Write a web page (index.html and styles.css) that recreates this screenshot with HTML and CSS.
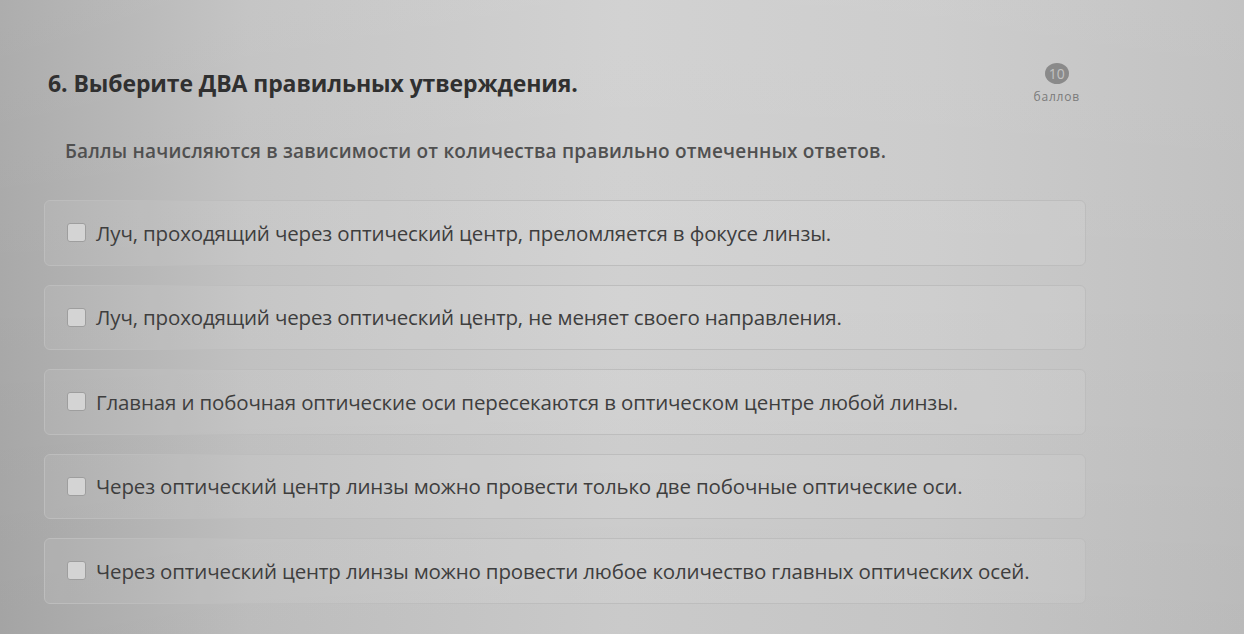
FILE: index.html
```html
<!DOCTYPE html>
<html lang="ru">
<head>
<meta charset="utf-8">
<link rel="stylesheet" href="styles.css">
</head>
<body>
<div class="page">
  <div class="question">
    <div class="head">
      <h1 class="title">6. Выберите ДВА правильных утверждения.</h1>
      <div class="score">
        <span class="badge">10</span>
        <span class="unit">баллов</span>
      </div>
    </div>
    <p class="hint">Баллы начисляются в зависимости от количества правильно отмеченных ответов.</p>
    <div class="options">
      <label class="option"><span class="box"></span><span class="text">Луч, проходящий через оптический центр, преломляется в фокусе линзы.</span></label>
      <label class="option"><span class="box"></span><span class="text">Луч, проходящий через оптический центр, не меняет своего направления.</span></label>
      <label class="option"><span class="box"></span><span class="text">Главная и побочная оптические оси пересекаются в оптическом центре любой линзы.</span></label>
      <label class="option"><span class="box"></span><span class="text">Через оптический центр линзы можно провести только две побочные оптические оси.</span></label>
      <label class="option"><span class="box"></span><span class="text">Через оптический центр линзы можно провести любое количество главных оптических осей.</span></label>
    </div>
  </div>
</div>
</body>
</html>
```
FILE: styles.css
```css
html, body {
  margin: 0;
  padding: 0;
  height: 100%;
}
body {
  font-family: "Open Sans", "Noto Sans", sans-serif;
  background: linear-gradient(90deg, #a9a9a9 0%, #c2c2c2 20%, #d0d0d0 50%, #cbcbcb 75%, #c0c0c0 100%);
  overflow: hidden;
}
.page {
  height: 634px;
  background: linear-gradient(180deg, rgba(255,255,255,0.05) 0%, rgba(0,0,0,0) 45%, rgba(0,0,0,0.03) 100%);
}
.question {
  width: 1042px;
  padding: 63px 0 0 44px;
}
.head {
  display: flex;
  justify-content: space-between;
  align-items: flex-start;
}
.title {
  margin: 4px 0 0 4px;
  font-size: 23px;
  font-weight: 700;
  color: #303030;
  letter-spacing: -0.1px;
}
.score {
  display: flex;
  flex-direction: column;
  align-items: center;
  margin-right: 6px;
  margin-top: 0;
}
.badge {
  width: 24px;
  height: 21px;
  border-radius: 50%;
  background: #8a8a8a;
  color: #c2c2c2;
  font-size: 14px;
  line-height: 21px;
  text-align: center;
}
.unit {
  margin-top: 6px;
  font-size: 12px;
  line-height: 14px;
  color: #7a7a7a;
  letter-spacing: 0.8px;
}
.hint {
  margin: 34px 0 0 21px;
  font-size: 19px;
  font-weight: 600;
  color: #505050;
  letter-spacing: 0.2px;
}
.options {
  margin-top: 36px;
  display: flex;
  flex-direction: column;
  gap: 19px;
}
.option {
  display: flex;
  align-items: center;
  gap: 10px;
  height: 65.5px;
  padding-left: 21px;
  border: 1px solid #bdbdbd;
  border-radius: 6px;
  background: rgba(255,255,255,0.07);
  box-sizing: border-box;
}
.box {
  width: 19px;
  height: 19px;
  border: 1.5px solid #9e9e9e;
  border-radius: 3px;
  background: #d4d4d4;
  flex: none;
  box-sizing: border-box;
  margin-left: 1px;
}
.text {
  font-size: 20.5px;
  color: #3e3e3e;
  letter-spacing: -0.15px;
}
```
